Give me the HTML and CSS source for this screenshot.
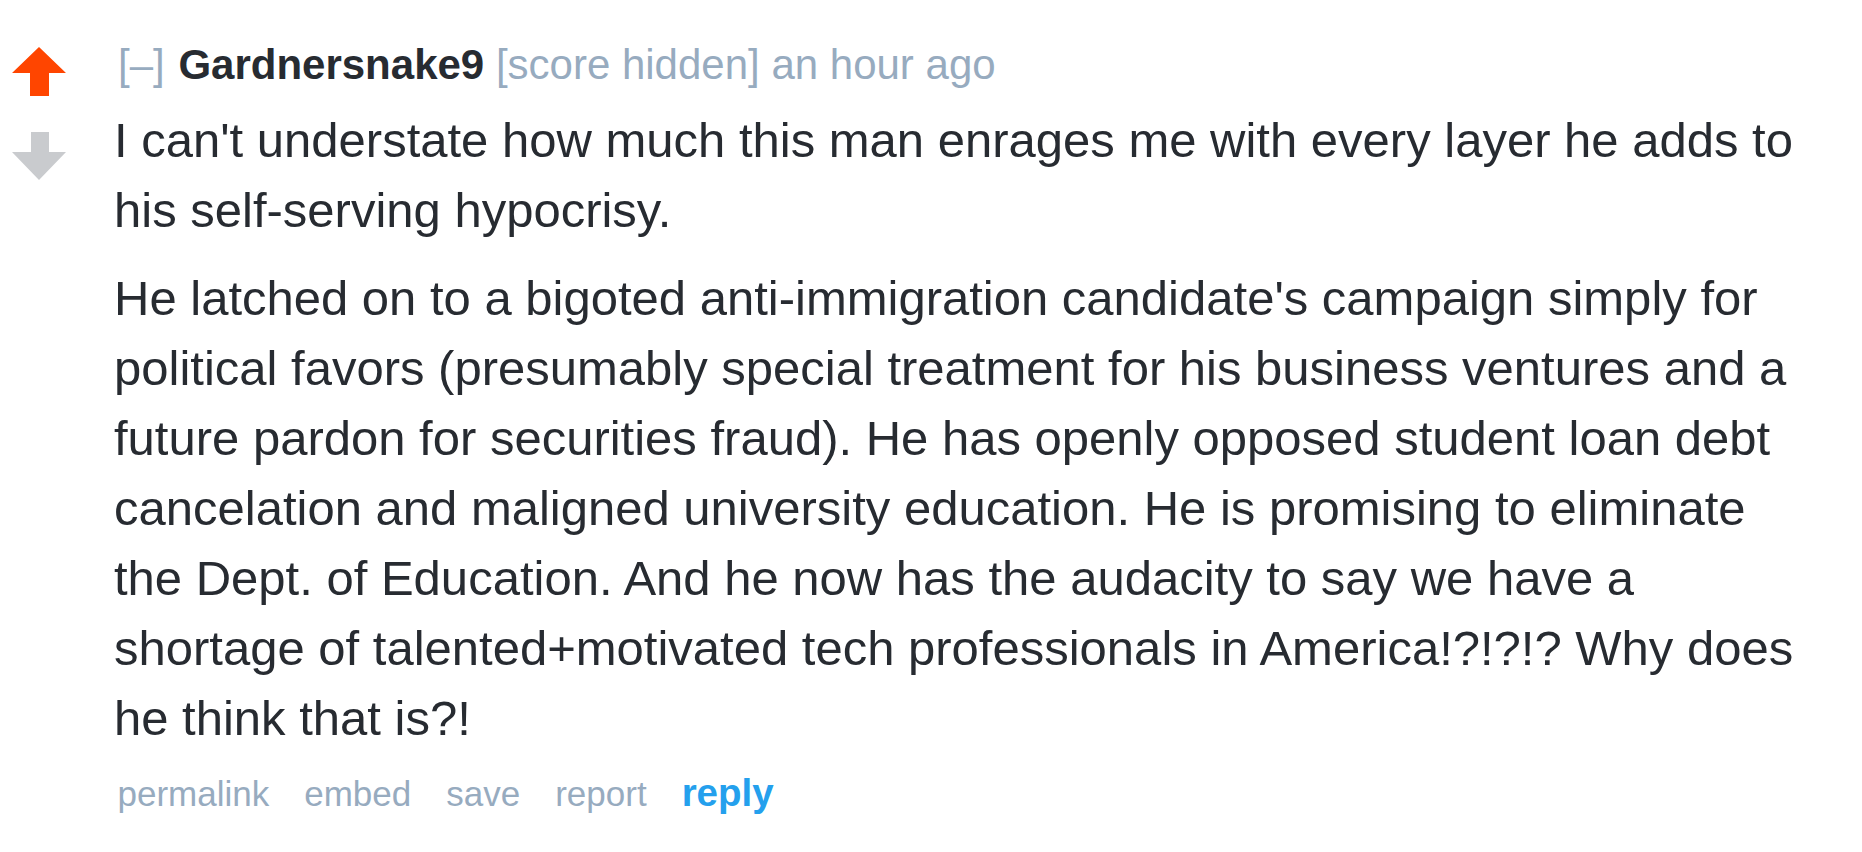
FILE: index.html
```html
<!DOCTYPE html>
<html lang="en">
<head>
<meta charset="utf-8">
<title>Comment</title>
<link rel="stylesheet" href="styles.css">
</head>
<body>
<div class="comment">
  <div class="midcol">
    <svg class="arrow" width="54" height="49" viewBox="0 0 54 49"><polygon points="27,0 54,26 37,26 37,49 18,49 18,26 0,26" fill="#ff4500"/></svg>
    <svg class="arrow" width="54" height="48" viewBox="0 0 54 48"><polygon points="19,0 37,0 37,20 54,20 27,48 0,20 19,20" fill="#c9cbce"/></svg>
  </div>
  <div class="entry">
    <p class="tagline"><span class="expand">[–]</span> <a class="author">Gardnersnake9</a> <span class="meta">[score hidden]</span> <span class="meta">an hour ago</span></p>
    <div class="md">
      <p>I can't understate how much this man enrages me with every layer he adds to his self-serving hypocrisy.</p>
      <p>He latched on to a bigoted anti-immigration candidate's campaign simply for political favors (presumably special treatment for his business ventures and a future pardon for securities fraud). He has openly opposed student loan debt cancelation and maligned university education. He is promising to eliminate the Dept. of Education. And he now has the audacity to say we have a shortage of talented+motivated tech professionals in America!?!?!? Why does he think that is?!</p>
    </div>
    <ul class="buttons">
      <li><a>permalink</a></li>
      <li><a>embed</a></li>
      <li><a>save</a></li>
      <li><a>report</a></li>
      <li><a class="reply">reply</a></li>
    </ul>
  </div>
</div>
</body>
</html>
```

FILE: styles.css
```css
html, body {
  margin: 0;
  padding: 0;
  background: #ffffff;
}

body {
  font-family: "Liberation Sans", Arial, sans-serif;
  color: #272b31;
}

.comment {
  display: flex;
  align-items: flex-start;
}

.midcol {
  width: 114px;
  flex: 0 0 114px;
  box-sizing: border-box;
  padding: 47px 0 0 12px;
  display: flex;
  flex-direction: column;
  gap: 36px;
}

.arrow {
  display: block;
}

.entry {
  flex: 0 1 1700px;
  max-width: 1700px;
}

.tagline {
  margin: 37px 0 0;
  padding-left: 4px;
  font-size: 42px;
  line-height: 56px;
  color: #97abbf;
  white-space: nowrap;
}

.expand {
  margin-right: 2px;
}

.author {
  font-weight: bold;
  color: #272b31;
}

.md {
  margin-top: 12px;
  font-size: 49px;
  line-height: 70px;
}

.md p {
  margin: 0 0 17.5px;
}

.buttons {
  list-style: none;
  margin: 0;
  padding: 1px 0 0 3.5px;
  display: flex;
  align-items: baseline;
  gap: 35px;
  font-size: 35px;
  line-height: 43px;
}

.buttons a {
  color: #97abbf;
}

.buttons a.reply {
  color: #24a0ed;
  font-weight: bold;
  font-size: 38.5px;
}
```
